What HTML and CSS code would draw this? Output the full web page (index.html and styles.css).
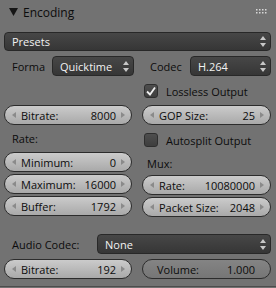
FILE: index.html
```html
<!DOCTYPE html>
<html>
<head>
    <meta charset="UTF-8">
    <title>Encoding</title>
    <link rel="stylesheet" href="styles.css">
</head>
<body>
    <div class="panel">
        <div class="header">
            <svg class="tri" width="9" height="8" viewBox="0 0 9 8"><polygon points="0,0 9,0 4.5,8" fill="#161616"/></svg>
            <span class="title">Encoding</span>
            <svg class="grip" width="12" height="5" viewBox="0 0 12 5">
                <g fill="#d8d8d8">
                    <rect x="0" y="0" width="1.5" height="1.5"/><rect x="3" y="0" width="1.5" height="1.5"/>
                    <rect x="6" y="0" width="1.5" height="1.5"/><rect x="9" y="0" width="1.5" height="1.5"/>
                    <rect x="0" y="3" width="1.5" height="1.5"/><rect x="3" y="3" width="1.5" height="1.5"/>
                    <rect x="6" y="3" width="1.5" height="1.5"/><rect x="9" y="3" width="1.5" height="1.5"/>
                </g>
            </svg>
        </div>

        <div class="menu presets">
            <span class="menu-text">Presets</span>
            <svg class="updown" width="6" height="11" viewBox="0 0 6 11"><polygon points="3,0 6,4 0,4" fill="#c8c8c8"/><polygon points="0,7 6,7 3,11" fill="#c8c8c8"/></svg>
        </div>

        <div class="row format-row">
            <span class="lbl forma">Forma</span>
            <div class="menu quick">
                <span class="menu-text">Quicktime</span>
                <svg class="updown" width="6" height="11" viewBox="0 0 6 11"><polygon points="3,0 6,4 0,4" fill="#c8c8c8"/><polygon points="0,7 6,7 3,11" fill="#c8c8c8"/></svg>
            </div>
            <span class="lbl codec">Codec</span>
            <div class="menu grow">
                <span class="menu-text">H.264</span>
                <svg class="updown" width="6" height="11" viewBox="0 0 6 11"><polygon points="3,0 6,4 0,4" fill="#c8c8c8"/><polygon points="0,7 6,7 3,11" fill="#c8c8c8"/></svg>
            </div>
        </div>

        <div class="cols">
            <div class="col">
                <div class="spacer"></div>
                <div class="num"><svg class="arr" width="4" height="6" viewBox="0 0 4 6"><polygon points="4,0 4,6 0,3"/></svg><span class="k">Bitrate:</span><span class="v">8000</span><svg class="arr" width="4" height="6" viewBox="0 0 4 6"><polygon points="0,0 0,6 4,3"/></svg></div>
                <div class="lbl sub rate">Rate:</div>
                <div class="num"><svg class="arr" width="4" height="6" viewBox="0 0 4 6"><polygon points="4,0 4,6 0,3"/></svg><span class="k">Minimum:</span><span class="v">0</span><svg class="arr" width="4" height="6" viewBox="0 0 4 6"><polygon points="0,0 0,6 4,3"/></svg></div>
                <div class="num stack"><svg class="arr" width="4" height="6" viewBox="0 0 4 6"><polygon points="4,0 4,6 0,3"/></svg><span class="k">Maximum:</span><span class="v">16000</span><svg class="arr" width="4" height="6" viewBox="0 0 4 6"><polygon points="0,0 0,6 4,3"/></svg></div>
                <div class="num stack"><svg class="arr" width="4" height="6" viewBox="0 0 4 6"><polygon points="4,0 4,6 0,3"/></svg><span class="k">Buffer:</span><span class="v">1792</span><svg class="arr" width="4" height="6" viewBox="0 0 4 6"><polygon points="0,0 0,6 4,3"/></svg></div>
            </div>
            <div class="col">
                <div class="check spacer">
                    <span class="box on"><svg width="10" height="9" viewBox="0 0 10 9"><polyline points="1,4.5 4,7.5 9,0.5" fill="none" stroke="#f0f0f0" stroke-width="1.8"/></svg></span>
                    <span class="lbl">Lossless Output</span>
                </div>
                <div class="num"><svg class="arr" width="4" height="6" viewBox="0 0 4 6"><polygon points="4,0 4,6 0,3"/></svg><span class="k">GOP Size:</span><span class="v">25</span><svg class="arr" width="4" height="6" viewBox="0 0 4 6"><polygon points="0,0 0,6 4,3"/></svg></div>
                <div class="check split">
                    <span class="box"></span>
                    <span class="lbl">Autosplit Output</span>
                </div>
                <div class="lbl sub mux">Mux:</div>
                <div class="num"><svg class="arr" width="4" height="6" viewBox="0 0 4 6"><polygon points="4,0 4,6 0,3"/></svg><span class="k">Rate:</span><span class="v">10080000</span><svg class="arr" width="4" height="6" viewBox="0 0 4 6"><polygon points="0,0 0,6 4,3"/></svg></div>
                <div class="num stack"><svg class="arr" width="4" height="6" viewBox="0 0 4 6"><polygon points="4,0 4,6 0,3"/></svg><span class="k">Packet Size:</span><span class="v">2048</span><svg class="arr" width="4" height="6" viewBox="0 0 4 6"><polygon points="0,0 0,6 4,3"/></svg></div>
            </div>
        </div>

        <div class="row audio-row">
            <span class="lbl audio">Audio Codec:</span>
            <div class="menu grow">
                <span class="menu-text">None</span>
                <svg class="updown" width="6" height="11" viewBox="0 0 6 11"><polygon points="3,0 6,4 0,4" fill="#c8c8c8"/><polygon points="0,7 6,7 3,11" fill="#c8c8c8"/></svg>
            </div>
        </div>

        <div class="cols last-row">
            <div class="num"><svg class="arr" width="4" height="6" viewBox="0 0 4 6"><polygon points="4,0 4,6 0,3"/></svg><span class="k">Bitrate:</span><span class="v">192</span><svg class="arr" width="4" height="6" viewBox="0 0 4 6"><polygon points="0,0 0,6 4,3"/></svg></div>
            <div class="num slider"><span class="k">Volume:</span><span class="v">1.000</span></div>
        </div>

        <div class="footer"></div>
    </div>
</body>
</html>
```

FILE: styles.css
```css
body {
    margin: 0;
    padding: 0;
    background-color: #727272;
    font-family: "Open Sans", "DejaVu Sans", sans-serif;
    font-size: 11px;
    color: #0c0c0c;
}
.panel {
    width: 276px;
    height: 288px;
    padding: 0 5px 0 4px;
    box-sizing: border-box;
}
.header {
    height: 25px;
    display: flex;
    align-items: center;
    position: relative;
}
.header .tri {
    margin-left: 5px;
    margin-top: -2px;
}
.header .title {
    margin-left: 5px;
    font-size: 12px;
    margin-top: -1px;
}
.header .grip {
    margin-left: auto;
    margin-right: 3px;
    margin-top: -2px;
}
.menu {
    height: 19px;
    box-sizing: border-box;
    border: 1px solid #282828;
    border-radius: 4px;
    background: linear-gradient(#474747, #363636);
    color: #f2f2f2;
    display: flex;
    align-items: center;
    padding: 0 4px 0 7px;
}
.menu .menu-text {
    flex: 1;
    line-height: 17px;
}
.presets {
    margin-top: 7px;
}
.row {
    display: flex;
    align-items: center;
}
.format-row {
    margin-top: 5px;
}
.format-row .menu {
    height: 20px;
}
.lbl {
    white-space: nowrap;
}
.forma {
    width: 40px;
    padding-left: 8px;
}
.quick {
    width: 82px;
}
.codec {
    width: 40px;
    padding-left: 16px;
}
.grow {
    flex: 1;
}
.cols {
    display: grid;
    grid-template-columns: 128px 129px;
    column-gap: 10px;
}
.col {
    display: flex;
    flex-direction: column;
}
.spacer {
    height: 22px;
    margin-top: 4px;
    margin-bottom: 3px;
}
.col > .spacer:not(.check) {
    visibility: hidden;
}
.num {
    height: 20px;
    box-sizing: border-box;
    border: 1px solid #2c2c2c;
    border-radius: 10px;
    background: linear-gradient(#cbcbcb, #a9a9a9);
    display: flex;
    align-items: center;
    padding: 0 6px 0 7px;
}
.num .arr {
    fill: #8a8a8a;
    flex: none;
}
.num .k {
    margin-left: 5px;
}
.num .v {
    margin-left: auto;
    margin-right: 5px;
}
.stack {
    margin-top: 2px;
}
.sub {
    height: 25px;
    line-height: 24px;
    margin-top: 2px;
    padding-left: 8px;
}
.mux {
    height: 24px;
    line-height: 26px;
    margin-top: 0;
    padding-left: 5px;
}
.check {
    display: flex;
    align-items: center;
}
.check .box {
    width: 14px;
    height: 14px;
    box-sizing: border-box;
    border: 1px solid #2e2e2e;
    border-radius: 3px;
    background: linear-gradient(#4e4e4e, #3e3e3e);
    display: flex;
    align-items: center;
    justify-content: center;
    margin-left: 2px;
    margin-right: 8px;
}
.split {
    height: 22px;
    margin-top: 4px;
}
.audio-row {
    margin-top: 17px;
}
.audio-row .menu {
    height: 20px;
}
.audio {
    width: 85px;
    padding-left: 8px;
}
.last-row {
    margin-top: 5px;
}
.slider {
    background: linear-gradient(#848484, #767676);
    padding: 0 15px 0 14px;
}
.slider .k {
    margin-left: 0;
}
.slider .v {
    margin-right: 0;
}
.footer {
    margin-top: 7px;
    margin-left: -4px;
    margin-right: -5px;
    height: 1px;
    background: #4c4c4c;
}
```
